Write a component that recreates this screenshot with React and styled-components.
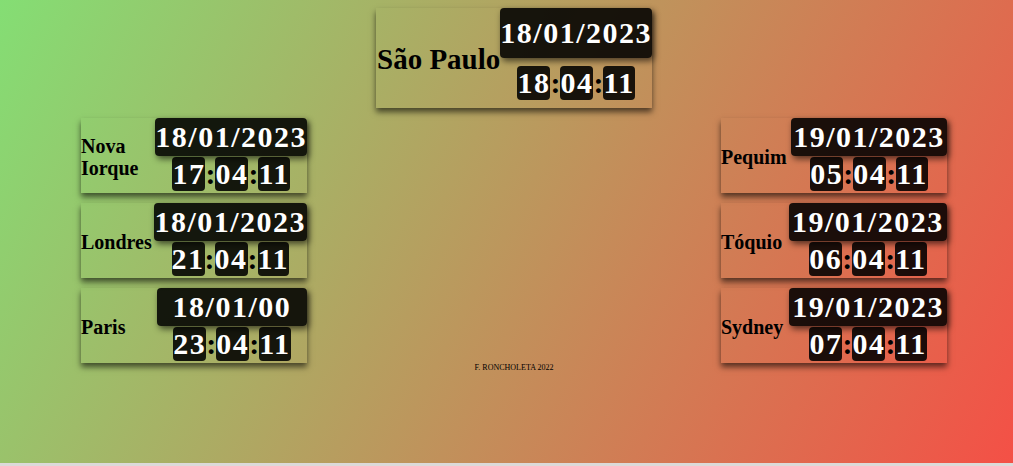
import React from "react";
import styled, { createGlobalStyle } from "styled-components";

const GlobalStyle = createGlobalStyle`
  * { box-sizing: border-box; }
  body {
    margin: 0;
    font-family: "Liberation Serif", "Times New Roman", serif;
    color: #000;
  }
`;

const Page = styled.div`
  min-height: 100vh;
  padding: 8px 0 0 15px;
  border-bottom: 3px solid #dcdad9;
  background: linear-gradient(118deg, #84de74, #f45046) padding-box;
`;

const Header = styled.header`
  display: flex;
  justify-content: center;
  margin-bottom: 10px;
`;

const Columns = styled.main`
  display: flex;
  justify-content: space-between;
  padding: 0 66px;
`;

const Column = styled.section`
  display: flex;
  flex-direction: column;
  gap: 10px;
`;

const Card = styled.article`
  display: grid;
  grid-template-columns: auto auto;
  align-items: center;
  width: ${(p) => (p.$large ? 276 : 226)}px;
  height: ${(p) => (p.$large ? 100 : 75)}px;
  box-shadow: 0 4px 6px rgba(0, 0, 0, 0.6);
`;

const City = styled.h2`
  margin: 0;
  padding-top: 2px;
  padding-left: ${(p) => (p.$large ? 1 : 0)}px;
  font-size: ${(p) => (p.$large ? 29 : 20)}px;
  line-height: ${(p) => (p.$large ? 34 : 22)}px;
  font-weight: bold;
`;

const Clock = styled.div`
  display: grid;
  grid-template-rows: 1fr 1fr;
  height: 100%;
  font-size: 30px;
  line-height: 34px;
  font-weight: bold;
  text-align: center;
`;

const DateBox = styled.time`
  display: flex;
  align-items: center;
  justify-content: center;
  border-radius: 4px;
  background: rgba(0, 0, 0, 0.88);
  box-shadow: 2px 3px 6px rgba(0, 0, 0, 0.6);
  color: #fff;
  letter-spacing: 0.05em;
`;

const Time = styled.time`
  display: flex;
  align-items: center;
  justify-content: center;
`;

const Digits = styled.span`
  border-radius: 4px;
  background: rgba(0, 0, 0, 0.88);
  color: #fff;
  letter-spacing: 0.05em;
`;

const Footer = styled.footer`
  font-size: 8px;
  line-height: 9px;
  text-align: center;
`;

const home = { city: "São Paulo", date: "18/01/2023", time: "18:04:11" };

const west = [
  { city: "Nova Iorque", date: "18/01/2023", time: "17:04:11" },
  { city: "Londres", date: "18/01/2023", time: "21:04:11" },
  { city: "Paris", date: "18/01/00", time: "23:04:11" },
];

const east = [
  { city: "Pequim", date: "19/01/2023", time: "05:04:11" },
  { city: "Tóquio", date: "19/01/2023", time: "06:04:11" },
  { city: "Sydney", date: "19/01/2023", time: "07:04:11" },
];

function CityClock({ city, date, time, large }) {
  return (
    <Card $large={large}>
      <City as={large ? "h1" : "h2"} $large={large}>{city}</City>
      <Clock>
        <DateBox>{date}</DateBox>
        <Time>
          {time.split(":").map((part, i) => (
            <React.Fragment key={i}>
              {i > 0 && <span>:</span>}
              <Digits>{part}</Digits>
            </React.Fragment>
          ))}
        </Time>
      </Clock>
    </Card>
  );
}

export default function App() {
  return (
    <>
      <GlobalStyle />
      <Page>
        <Header>
          <CityClock {...home} large />
        </Header>
        <Columns>
          <Column>{west.map((c) => <CityClock key={c.city} {...c} />)}</Column>
          <Column>{east.map((c) => <CityClock key={c.city} {...c} />)}</Column>
        </Columns>
        <Footer>F. RONCHOLETA 2022</Footer>
      </Page>
    </>
  );
}
